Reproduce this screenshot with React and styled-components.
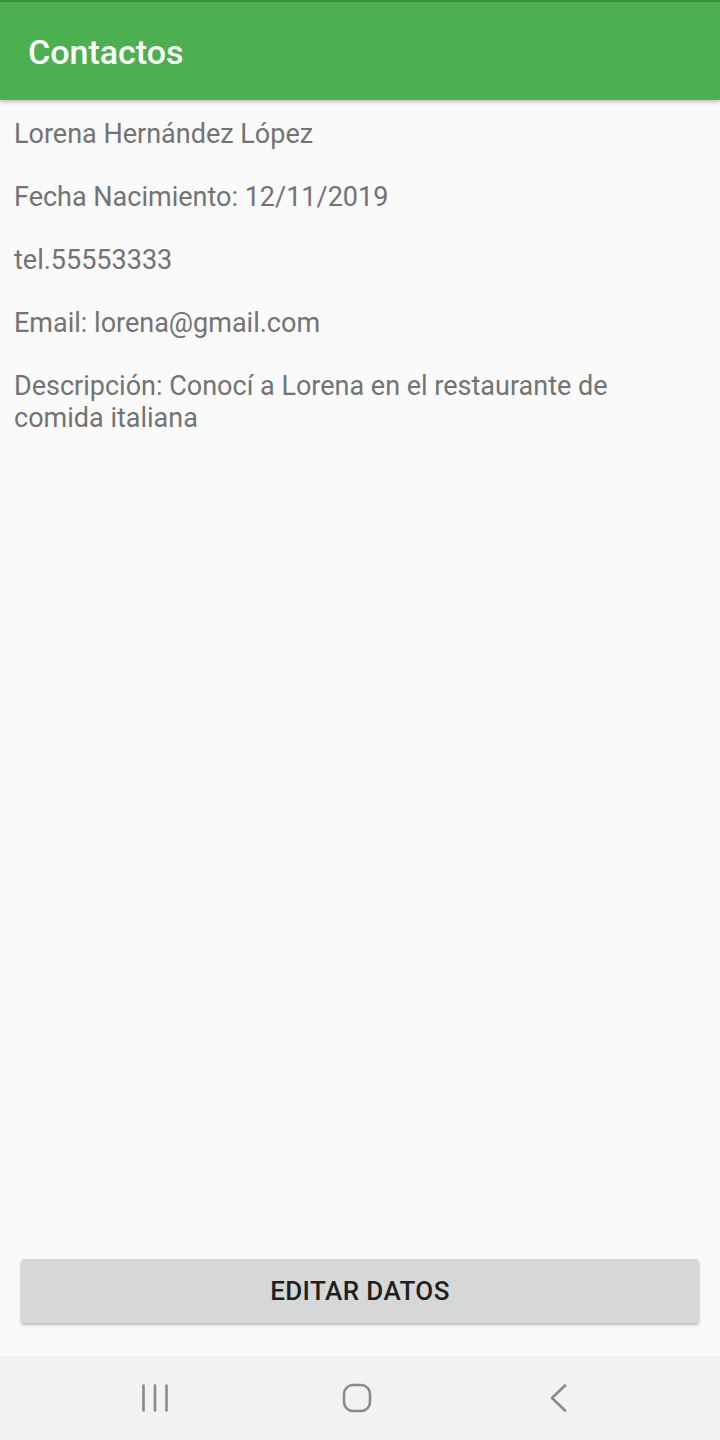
import React from "react";
import styled, { createGlobalStyle } from "styled-components";

const GlobalStyle = createGlobalStyle`
  html, body {
    margin: 0;
    padding: 0;
    background: #fafafa;
  }
  body {
    font-family: Roboto, "Noto Sans", sans-serif;
  }
`;

const Screen = styled.div`
  width: 720px;
  height: 1440px;
  display: flex;
  flex-direction: column;
  background: #fafafa;
  overflow: hidden;
`;

const TopBar = styled.header`
  height: 100px;
  box-sizing: border-box;
  border-top: 2px solid #3e8e41;
  background: #4caf50;
  display: flex;
  align-items: center;
  padding-left: 28px;
  box-shadow: 0 2px 4px rgba(0, 0, 0, 0.25);
  z-index: 1;
`;

const Title = styled.h1`
  margin: 0;
  color: #fff;
  font-size: 34px;
  font-weight: 500;
  margin-top: 2px;
`;

const Content = styled.main`
  flex: 1;
  display: flex;
  flex-direction: column;
  padding: 18px 14px 0;
`;

const Field = styled.p`
  margin: 0 0 31px;
  font-size: 27px;
  line-height: 32px;
  color: #737373;
  max-width: 640px;
`;

const Footer = styled.div`
  padding: 0 21px 33px;
`;

const Button = styled.button`
  width: 100%;
  height: 64px;
  border: none;
  border-radius: 3px;
  background: #d6d7d7;
  color: #1f1f1f;
  font-family: Roboto, sans-serif;
  font-size: 26px;
  font-weight: 500;
  letter-spacing: 0.4px;
  box-shadow: 0 2px 3px rgba(0, 0, 0, 0.25);
`;

const NavBar = styled.nav`
  height: 84px;
  background: #f2f2f2;
  display: flex;
  justify-content: center;
  align-items: center;
  gap: 172px;
  padding-right: 7px;
`;

const NavIcon = styled.svg`
  width: 30px;
  height: 30px;
  color: #8a8a8a;
`;

function App() {
  return (
    <Screen>
      <GlobalStyle />
      <TopBar>
        <Title>Contactos</Title>
      </TopBar>
      <Content>
        <Field>Lorena Hernández López</Field>
        <Field>Fecha Nacimiento: 12/11/2019</Field>
        <Field>tel.55553333</Field>
        <Field>Email: lorena@gmail.com</Field>
        <Field>Descripción: Conocí a Lorena en el restaurante de comida italiana</Field>
      </Content>
      <Footer>
        <Button>EDITAR DATOS</Button>
      </Footer>
      <NavBar>
        <NavIcon viewBox="0 0 30 30" fill="none" stroke="currentColor" strokeWidth="2.6" strokeLinecap="round">
          <line x1="3.5" y1="2.5" x2="3.5" y2="27.5" />
          <line x1="15" y1="2.5" x2="15" y2="27.5" />
          <line x1="26.5" y1="2.5" x2="26.5" y2="27.5" />
        </NavIcon>
        <NavIcon viewBox="0 0 30 30" fill="none" stroke="currentColor" strokeWidth="2.6">
          <rect x="2" y="2" width="26" height="26" rx="9" />
        </NavIcon>
        <NavIcon viewBox="0 0 30 30" fill="none" stroke="currentColor" strokeWidth="2.6" strokeLinecap="round" strokeLinejoin="round">
          <polyline points="21,2.5 8,15 21,27.5" />
        </NavIcon>
      </NavBar>
    </Screen>
  );
}

export default App;
